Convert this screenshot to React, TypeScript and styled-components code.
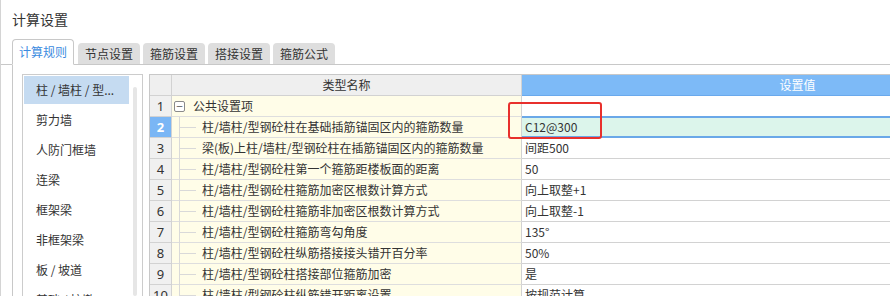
import styled, { createGlobalStyle } from "styled-components";

const GlobalStyle = createGlobalStyle`
  html, body {
    margin: 0;
    padding: 0;
    background: #ffffff;
    overflow: hidden;
  }
  body {
    font-family: "Noto Sans CJK SC", "Noto Sans", sans-serif;
    color: #333333;
  }
`;

interface RuleRow {
  name: string;
  value: string;
}

const categories = [
  "柱 / 墙柱 / 型...",
  "剪力墙",
  "人防门框墙",
  "连梁",
  "框架梁",
  "非框架梁",
  "板 / 坡道",
  "基础 / 柱墩",
];

const rules: RuleRow[] = [
  { name: "柱/墙柱/型钢砼柱在基础插筋锚固区内的箍筋数量", value: "C12@300" },
  { name: "梁(板)上柱/墙柱/型钢砼柱在插筋锚固区内的箍筋数量", value: "间距500" },
  { name: "柱/墙柱/型钢砼柱第一个箍筋距楼板面的距离", value: "50" },
  { name: "柱/墙柱/型钢砼柱箍筋加密区根数计算方式", value: "向上取整+1" },
  { name: "柱/墙柱/型钢砼柱箍筋非加密区根数计算方式", value: "向上取整-1" },
  { name: "柱/墙柱/型钢砼柱箍筋弯勾角度", value: "135°" },
  { name: "柱/墙柱/型钢砼柱纵筋搭接接头错开百分率", value: "50%" },
  { name: "柱/墙柱/型钢砼柱搭接部位箍筋加密", value: "是" },
  { name: "柱/墙柱/型钢砼柱纵筋错开距离设置", value: "按规范计算" },
];

const tabs = ["计算规则", "节点设置", "箍筋设置", "搭接设置", "箍筋公式"];

const App = () => {
  const selectedRow = 2;

  return (
    <>
      <GlobalStyle />
      <Window>
        <Title>计算设置</Title>
        <TabBar>
          {tabs.map((t, i) => (
            <Tab key={t} $active={i === 0}>
              {t}
            </Tab>
          ))}
        </TabBar>
        <Panel>
          <Sidebar>
            <CategoryList>
              {categories.map((c, i) => (
                <CategoryItem key={c} $selected={i === 0}>
                  {c}
                </CategoryItem>
              ))}
            </CategoryList>
            <ScrollTrack />
          </Sidebar>
          <GridWrap>
            <GridRow>
              <HeaderCell />
              <HeaderCell>类型名称</HeaderCell>
              <HeaderCell $blue>设置值</HeaderCell>
            </GridRow>
            <GridRow>
              <NumCell>1</NumCell>
              <NameCell>
                <Collapse>−</Collapse>
                <GroupLabel>公共设置项</GroupLabel>
              </NameCell>
              <ValueCell />
            </GridRow>
            {rules.map((r, i) => {
              const n = i + 2;
              const sel = n === selectedRow;
              return (
                <GridRow key={n}>
                  <NumCell $selected={sel}>{n}</NumCell>
                  <NameCell>
                    <TreeGuide />
                    {r.name}
                  </NameCell>
                  <ValueCell $selected={sel}>{r.value}</ValueCell>
                </GridRow>
              );
            })}
            <Highlight />
          </GridWrap>
        </Panel>
      </Window>
    </>
  );
};

const Window = styled.div`
  width: 890px;
  height: 296px;
  box-sizing: border-box;
  border-left: 1px solid #d4d4d4;
  display: flex;
  flex-direction: column;
  overflow: hidden;
`;

const Title = styled.div`
  flex-shrink: 0;
  padding: 9px 0 0 11px;
  height: 39px;
  box-sizing: border-box;
  font-size: 14px;
  line-height: 20px;
  color: #333333;
`;

const TabBar = styled.div`
  flex-shrink: 0;
  display: flex;
  align-items: flex-end;
  gap: 3px;
  padding-left: 11px;
  height: 26px;
  box-sizing: border-box;
  border-bottom: 1px solid #c8c8c8;
`;

const Tab = styled.div<{ $active?: boolean }>`
  box-sizing: border-box;
  height: ${(p) => (p.$active ? "26px" : "21px")};
  margin-bottom: ${(p) => (p.$active ? "-1px" : "0")};
  padding: 0 ${(p) => (p.$active ? "6px" : "7px")};
  font-size: 12px;
  line-height: ${(p) => (p.$active ? "24px" : "21px")};
  color: ${(p) => (p.$active ? "#3b8be0" : "#333333")};
  background: ${(p) => (p.$active ? "#ffffff" : "#dedede")};
  border: ${(p) => (p.$active ? "1px solid #c8c8c8" : "none")};
  border-bottom: ${(p) => (p.$active ? "1px solid #ffffff" : "none")};
  border-radius: 4px 4px 0 0;
  margin-right: ${(p) => (p.$active ? "1px" : "0")};
`;

const Panel = styled.div`
  flex: 1;
  margin-left: 11px;
  border-left: 1px solid #c8c8c8;
  padding: 9px 0 0 9px;
  display: flex;
  gap: 6px;
  min-height: 0;
`;

const Sidebar = styled.div`
  width: 121px;
  flex-shrink: 0;
  box-sizing: border-box;
  border: 1px solid #cccccc;
  border-bottom: none;
  display: flex;
  padding: 1px 0 0 1px;
  overflow: hidden;
`;

const CategoryList = styled.div`
  width: 105px;
  display: flex;
  flex-direction: column;
  gap: 2px;
`;

const CategoryItem = styled.div<{ $selected?: boolean }>`
  height: 28px;
  flex-shrink: 0;
  padding-left: 12px;
  font-size: 12px;
  line-height: 28px;
  white-space: nowrap;
  color: #333333;
  background: ${(p) => (p.$selected ? "#c5dbf1" : "transparent")};
`;

const ScrollTrack = styled.div`
  width: 4px;
  margin: 11px 0 0 4px;
  background: #e6e6e6;
  border-radius: 2px;
`;

const GridWrap = styled.div`
  position: relative;
  width: 927px;
  flex-shrink: 0;
  border-top: 1px solid #c8c8c8;
  border-left: 1px solid #c8c8c8;
`;

const GridRow = styled.div`
  display: grid;
  grid-template-columns: 22px 350px 552px;
  height: 21px;
`;

const HeaderCell = styled.div<{ $blue?: boolean }>`
  box-sizing: border-box;
  text-align: center;
  font-size: 12px;
  line-height: 20px;
  color: ${(p) => (p.$blue ? "#ffffff" : "#333333")};
  background: ${(p) => (p.$blue ? "#7dbaf7" : "#efefef")};
  border-right: 1px solid ${(p) => (p.$blue ? "#6aa9ec" : "#d2d2d2")};
  border-bottom: 1px solid ${(p) => (p.$blue ? "#6aa9ec" : "#d2d2d2")};
`;

const NumCell = styled.div<{ $selected?: boolean }>`
  box-sizing: border-box;
  text-align: center;
  font-family: "Noto Sans", "Liberation Sans", sans-serif;
  font-size: 13px;
  line-height: 20px;
  font-weight: ${(p) => (p.$selected ? 700 : 400)};
  color: ${(p) => (p.$selected ? "#ffffff" : "#333333")};
  background: ${(p) => (p.$selected ? "#7ab6f5" : "#f0f0f0")};
  border-right: 1px solid #d2d2d2;
  border-bottom: 1px solid #d2d2d2;
`;

const NameCell = styled.div`
  box-sizing: border-box;
  display: flex;
  align-items: stretch;
  font-size: 12px;
  line-height: 20px;
  white-space: nowrap;
  color: #333333;
  background: #fffde8;
  border-right: 1px solid #d2d2d2;
  border-bottom: 1px solid #dedede;
`;

const TreeGuide = styled.span`
  width: 30px;
  flex-shrink: 0;
  margin-bottom: -1px;
  background:
    linear-gradient(#d9d9d9, #d9d9d9) 7px 0 / 1px 100% no-repeat,
    linear-gradient(#d9d9d9, #d9d9d9) 7px 10px / 17px 1px no-repeat;
`;

const Collapse = styled.span`
  box-sizing: border-box;
  width: 11px;
  height: 11px;
  margin: 5px 0 0 2px;
  border: 1px solid #8a8a8a;
  border-radius: 2px;
  background: #ffffff;
  font-family: "DejaVu Sans", sans-serif;
  font-size: 9px;
  line-height: 8px;
  text-align: center;
  color: #555555;
`;

const GroupLabel = styled.span`
  margin-left: 8px;
`;

const ValueCell = styled.div<{ $selected?: boolean }>`
  box-sizing: border-box;
  padding-left: 3px;
  font-size: 12px;
  line-height: ${(p) => (p.$selected ? "17px" : "20px")};
  white-space: nowrap;
  color: #333333;
  background: ${(p) => (p.$selected ? "#dcf5eb" : "#ffffff")};
  border-top: ${(p) => (p.$selected ? "2px solid #6aa8e8" : "none")};
  border-bottom: ${(p) => (p.$selected ? "2px solid #6aa8e8" : "1px solid #d2d2d2")};
  margin-top: ${(p) => (p.$selected ? "-1px" : "0")};
  height: ${(p) => (p.$selected ? "22px" : "21px")};
`;

const Highlight = styled.div`
  position: absolute;
  left: 358px;
  top: 27px;
  width: 94px;
  height: 37px;
  box-sizing: border-box;
  border: 2px solid #e8302c;
  border-radius: 3px;
  pointer-events: none;
`;

export default App;
